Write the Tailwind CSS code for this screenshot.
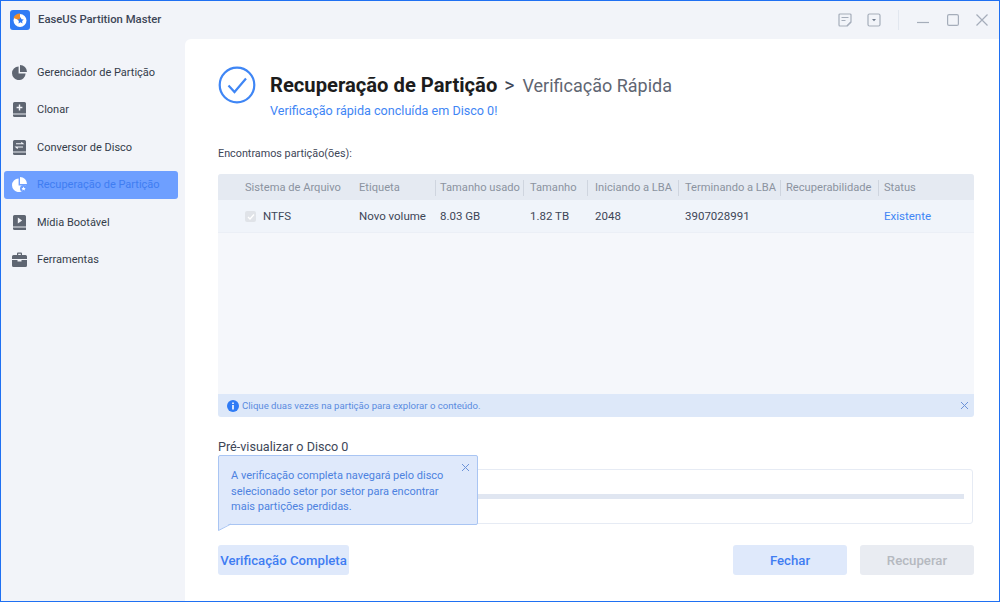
<!DOCTYPE html>
<html lang="pt">
<head>
  <meta charset="UTF-8" />
  <title>EaseUS Partition Master</title>
  <script src="https://cdn.jsdelivr.net/npm/@tailwindcss/browser@4"></script>
</head>
<body class="w-[1000px] h-[602px] overflow-hidden bg-white font-['Roboto',sans-serif]">
  <div class="w-[1000px] h-[602px] border border-[#1f70f2] bg-[#f2f4f9] flex flex-col">

    <!-- title bar -->
    <div class="h-[38px] flex items-center shrink-0">
      <svg class="ml-[9px] w-5 h-5" viewBox="0 0 20 20">
        <rect width="20" height="20" rx="3" fill="#2f7bf5"/>
        <circle cx="10" cy="10.5" r="6.5" fill="#fff"/>
        <path d="M10 10.5V3.5A7 7 0 0 0 3.5 8z" fill="#f28c28"/>
        <path d="M10.5 7l1 2.2 2.3.3-1.7 1.6.4 2.3-2-1.1-2 1.1.4-2.3-1.7-1.6 2.3-.3z" fill="#2f7bf5"/>
      </svg>
      <span class="ml-2 text-[11.3px] font-medium text-[#3d4657]">EaseUS Partition Master</span>
      <div class="ml-auto flex items-center">
        <svg class="w-[14px] h-[14px]" viewBox="0 0 14 14" fill="none" stroke="#a5adba" stroke-width="1.2">
          <path d="M13 9V2a1 1 0 0 0-1-1H2a1 1 0 0 0-1 1v10a1 1 0 0 0 1 1h7z"/>
          <path d="M3.5 4.5h7M3.5 7.5h4M9 13l4-4"/>
        </svg>
        <svg class="ml-[15px] w-[14px] h-[14px]" viewBox="0 0 14 14" fill="none" stroke="#a5adba" stroke-width="1.2">
          <rect x="1" y="1" width="12" height="12" rx="1.5"/>
          <path d="M5 6h4L7 8.2z" fill="#6f7a8c" stroke="none"/>
        </svg>
        <div class="ml-[17px] w-px h-5 bg-[#e2e7ef]"></div>
        <svg class="ml-[18px] w-3 h-3" viewBox="0 0 12 12" stroke="#a5adba" stroke-width="1.2"><path d="M0 8.5h12"/></svg>
        <svg class="ml-[18px] w-3 h-3" viewBox="0 0 12 12" fill="none" stroke="#a5adba" stroke-width="1.2"><rect x=".6" y=".6" width="10.8" height="10.8" rx="1.5"/></svg>
        <svg class="ml-[17px] mr-[11px] w-3 h-3" viewBox="0 0 12 12" stroke="#a5adba" stroke-width="1.2"><path d="M.5.5l11 11M11.5.5l-11 11"/></svg>
      </div>
    </div>

    <div class="flex flex-1 min-h-0">
      <!-- sidebar -->
      <nav class="w-[184px] shrink-0 pt-[19px] pl-[3px] pr-[7px] flex flex-col gap-[9.5px] text-[11px] text-[#343c4a]">
        <div class="h-7 pl-2 flex items-center gap-[10px]">
          <svg class="w-[15px] h-[15px]" viewBox="0 0 15 15" fill="#5f6672"><path d="M6.6 1.5v7h7A6.8 6.8 0 1 1 6.6 1.5z"/><path d="M8 0a7 7 0 0 1 7 7H8z"/></svg>
          <span class="pt-[2px]">Gerenciador de Partição</span>
        </div>
        <div class="h-7 pl-2 flex items-center gap-[10px]">
          <svg class="w-[15px] h-[15px]" viewBox="0 0 15 15"><path d="M2.5 0h10A1.5 1.5 0 0 1 14 1.5V11H1V1.5A1.5 1.5 0 0 1 2.5 0z" fill="#5f6672"/><path d="M1 11h13v2.2H1z" fill="#a4a9b2"/><path d="M1 13h13v2H2.5A1.5 1.5 0 0 1 1 13.5z" fill="#5f6672"/><path d="M6.8 2.6h1.4v2.2h2.2v1.4H8.2v2.2H6.8V6.2H4.6V4.8h2.2z" fill="#f2f4f9"/></svg>
          <span class="pt-[2px]">Clonar</span>
        </div>
        <div class="h-7 pl-2 flex items-center gap-[10px]">
          <svg class="w-[15px] h-[15px]" viewBox="0 0 15 15"><path d="M2.5 0h10A1.5 1.5 0 0 1 14 1.5V11H1V1.5A1.5 1.5 0 0 1 2.5 0z" fill="#5f6672"/><path d="M1 11h13v2.2H1z" fill="#a4a9b2"/><path d="M1 13h13v2H2.5A1.5 1.5 0 0 1 1 13.5z" fill="#5f6672"/><path d="M4 3.8h7L9.3 2.3M11 7H4l1.7 1.5" stroke="#f2f4f9" stroke-width="1.1" fill="none"/></svg>
          <span class="pt-[2px]">Conversor de Disco</span>
        </div>
        <div class="h-7 pl-2 flex items-center gap-[10px] rounded-[3px] bg-[#6e9fff] text-[#3f7df2]">
          <svg class="w-[15px] h-[15px]" viewBox="0 0 15 15"><path d="M6.6 1.5v7h7A6.8 6.8 0 1 1 6.6 1.5z" fill="#fff"/><path d="M8 0a7 7 0 0 1 7 7H8z" fill="#fff"/><circle cx="11.5" cy="11.5" r="3.5" fill="#6e9fff"/><path d="M11.5 9.5l.7 1.4 1.5.1-1.1 1 .4 1.5-1.5-.8-1.3.8.3-1.5-1-1 1.4-.1z" fill="#fff"/></svg>
          <span class="pt-[2px]">Recuperação de Partição</span>
        </div>
        <div class="h-7 pl-2 flex items-center gap-[10px]">
          <svg class="w-[15px] h-[15px]" viewBox="0 0 15 15"><path d="M2.5 0h10A1.5 1.5 0 0 1 14 1.5V11H1V1.5A1.5 1.5 0 0 1 2.5 0z" fill="#5f6672"/><path d="M1 11h13v2.2H1z" fill="#a4a9b2"/><path d="M1 13h13v2H2.5A1.5 1.5 0 0 1 1 13.5z" fill="#5f6672"/><path d="M5.8 2.6l4.4 2.9-4.4 2.9z" fill="#f2f4f9"/></svg>
          <span class="pt-[2px]">Mídia Bootável</span>
        </div>
        <div class="h-7 pl-2 flex items-center gap-[10px]">
          <svg class="w-[15px] h-[15px]" viewBox="0 0 15 15" fill="#5f6672"><path d="M5 3V1.5A1 1 0 0 1 6 .5h3a1 1 0 0 1 1 1V3h3.5A1.5 1.5 0 0 1 15 4.5V7H0V4.5A1.5 1.5 0 0 1 1.5 3zm1.2 0h2.6V1.7H6.2z"/><path d="M0 8h5.5v1.5h4V8H15v5.5a1.5 1.5 0 0 1-1.5 1.5h-12A1.5 1.5 0 0 1 0 13.5z"/></svg>
          <span class="pt-[2px]">Ferramentas</span>
        </div>
      </nav>

      <!-- content -->
      <main class="relative flex-1 bg-white rounded-tl-[6px] pl-[33px] pr-[24px] flex flex-col">
        <div class="mt-[27px] flex">
          <svg class="w-[38px] h-[38px] shrink-0" viewBox="0 0 38 38" fill="none">
            <circle cx="19" cy="19" r="17.3" stroke="#3f86f5" stroke-width="2.2"/>
            <path d="M10.5 19.5l6 6.5L28 12.5" stroke="#3f86f5" stroke-width="2.2"/>
          </svg>
          <div class="ml-[14px] mt-[2px]">
            <div class="flex items-baseline h-[35px] leading-[35px]">
              <span class="text-[20.2px] font-bold text-[#1c1c1c]">Recuperação de Partição</span>
              <span class="ml-[7px] text-[19.5px] text-[#3d4657]">&gt;</span>
              <span class="ml-[8px] text-[18px] text-[#5f6672]">Verificação Rápida</span>
            </div>
            <div class="text-[12.6px] leading-[16px] text-[#3f86f5]">Verificação rápida concluída em Disco 0!</div>
          </div>
        </div>

        <div class="mt-[27px] text-[10.8px] leading-[16px] text-[#3d4657]">Encontramos partição(ões):</div>

        <!-- table -->
        <div class="mt-[12px] h-[220px] w-[756px] rounded-t-[3px] bg-[#f5f7fb] overflow-hidden flex flex-col text-[11.5px]">
          <div class="h-[26px] pt-[2px] bg-[#e5eaf2] flex items-center text-[11.15px] text-[#8b93a0] shrink-0 whitespace-nowrap">
            <div class="w-[141px] pl-[27px]">Sistema de Arquivo</div>
            <div class="w-[76px]">Etiqueta</div>
            <div class="w-[88px] pl-[4px] border-l border-[#cfd5df]">Tamanho usado</div>
            <div class="w-[64px] pl-[6px] border-l border-[#cfd5df]">Tamanho</div>
            <div class="w-[91px] pl-[7px] border-l border-[#cfd5df]">Iniciando a LBA</div>
            <div class="w-[102px] pl-[6px] border-l border-[#cfd5df]">Terminando a LBA</div>
            <div class="w-[98px] pl-[5px] border-l border-[#cfd5df]">Recuperabilidade</div>
            <div class="pl-[5px] border-l border-[#cfd5df]">Status</div>
          </div>
          <div class="h-[33px] pt-px bg-[#f0f4fa] border-b border-[#ebeff6] flex items-center text-[#3d4657] shrink-0">
            <div class="w-[141px] pl-[27px] flex items-center">
              <span class="w-[11px] h-[11px] rounded-[2px] bg-[#e0e3e8] flex items-center justify-center">
                <svg class="w-2 h-2" viewBox="0 0 8 8" fill="none" stroke="#fff" stroke-width="1.3"><path d="M1 4l2 2 4-4.5"/></svg>
              </span>
              <span class="ml-[7px]">NTFS</span>
            </div>
            <div class="w-[76px]">Novo volume</div>
            <div class="w-[88px] pl-[5px]">8.03 GB</div>
            <div class="w-[64px] pl-[7px]">1.82 TB</div>
            <div class="w-[91px] pl-[8px]">2048</div>
            <div class="w-[102px] pl-[7px]">3907028991</div>
            <div class="w-[98px]"></div>
            <div class="pl-[6px] text-[#3f86f5]">Existente</div>
          </div>
        </div>

        <!-- hint -->
        <div class="h-[23px] w-[756px] rounded-b-[3px] bg-[#dde8f9] flex items-center pl-[9px] pr-[4px] text-[9.6px] text-[#5a8be0]">
          <svg class="w-3 h-3 shrink-0" viewBox="0 0 12 12"><circle cx="6" cy="6" r="6" fill="#2f7bf5"/><path d="M5.2 2.4h1.6v1.5H5.2zM5.2 5h1.6v4.6H5.2z" fill="#fff"/></svg>
          <span class="ml-[3px] pt-[2px]">Clique duas vezes na partição para explorar o conteúdo.</span>
          <svg class="ml-auto mr-[2px] w-[7px] h-[7px]" viewBox="0 0 7 7" stroke="#6d93d8" stroke-width="1"><path d="M0 0l7 7M7 0L0 7"/></svg>
        </div>

        <div class="mt-[21px] text-[12.6px] leading-[17px] text-[#3d4657]">Pré-visualizar o Disco 0</div>

        <!-- disk preview -->
        <div class="mt-[14px] h-[55px] w-[755px] rounded-[3px] border border-[#e6ebf4] flex items-center justify-end pr-2">
          <div class="w-[600px] h-[5px] bg-[#e0e6f1]"></div>
        </div>

        <!-- buttons -->
        <div class="mt-[21px] w-[756px] flex text-[13.2px] font-medium">
          <button class="w-[131px] h-[30px] pt-[2px] rounded-[3px] bg-[#dfe9fb] text-[#3f7df2]">Verificação Completa</button>
          <button class="ml-auto w-[114px] h-[30px] pt-[2px] rounded-[3px] bg-[#dfe9fb] text-[#3f7df2]">Fechar</button>
          <button class="ml-[13px] w-[114px] h-[30px] pt-[2px] rounded-[3px] bg-[#e9ecf2] text-[#b5b9c0]">Recuperar</button>
        </div>

        <!-- tooltip over the disk preview -->
        <div class="absolute left-[33px] top-[416px] w-[260px] h-[70px] bg-[#dfe9fb] border border-[#a9c5f3] rounded-[2px] pl-[12px] pt-[12px] text-[11px] leading-[15.5px] text-[#4d82e0]">
          <p>A verificação completa navegará pelo disco</p>
          <p>selecionado setor por setor para encontrar</p>
          <p>mais partições perdidas.</p>
          <svg class="absolute right-[8px] top-[8px] w-[7px] h-[7px]" viewBox="0 0 7 7" stroke="#6d93d8" stroke-width="1"><path d="M0 0l7 7M7 0L0 7"/></svg>
          <svg class="absolute left-[-1px] top-[67px] w-[14px] h-[8px]" viewBox="0 0 14 8"><path d="M.5 0v7.5L13 0z" fill="#dfe9fb"/><path d="M.5 0v7.5L13 1" fill="none" stroke="#a9c5f3"/></svg>
        </div>
      </main>
    </div>
  </div>
</body>
</html>
